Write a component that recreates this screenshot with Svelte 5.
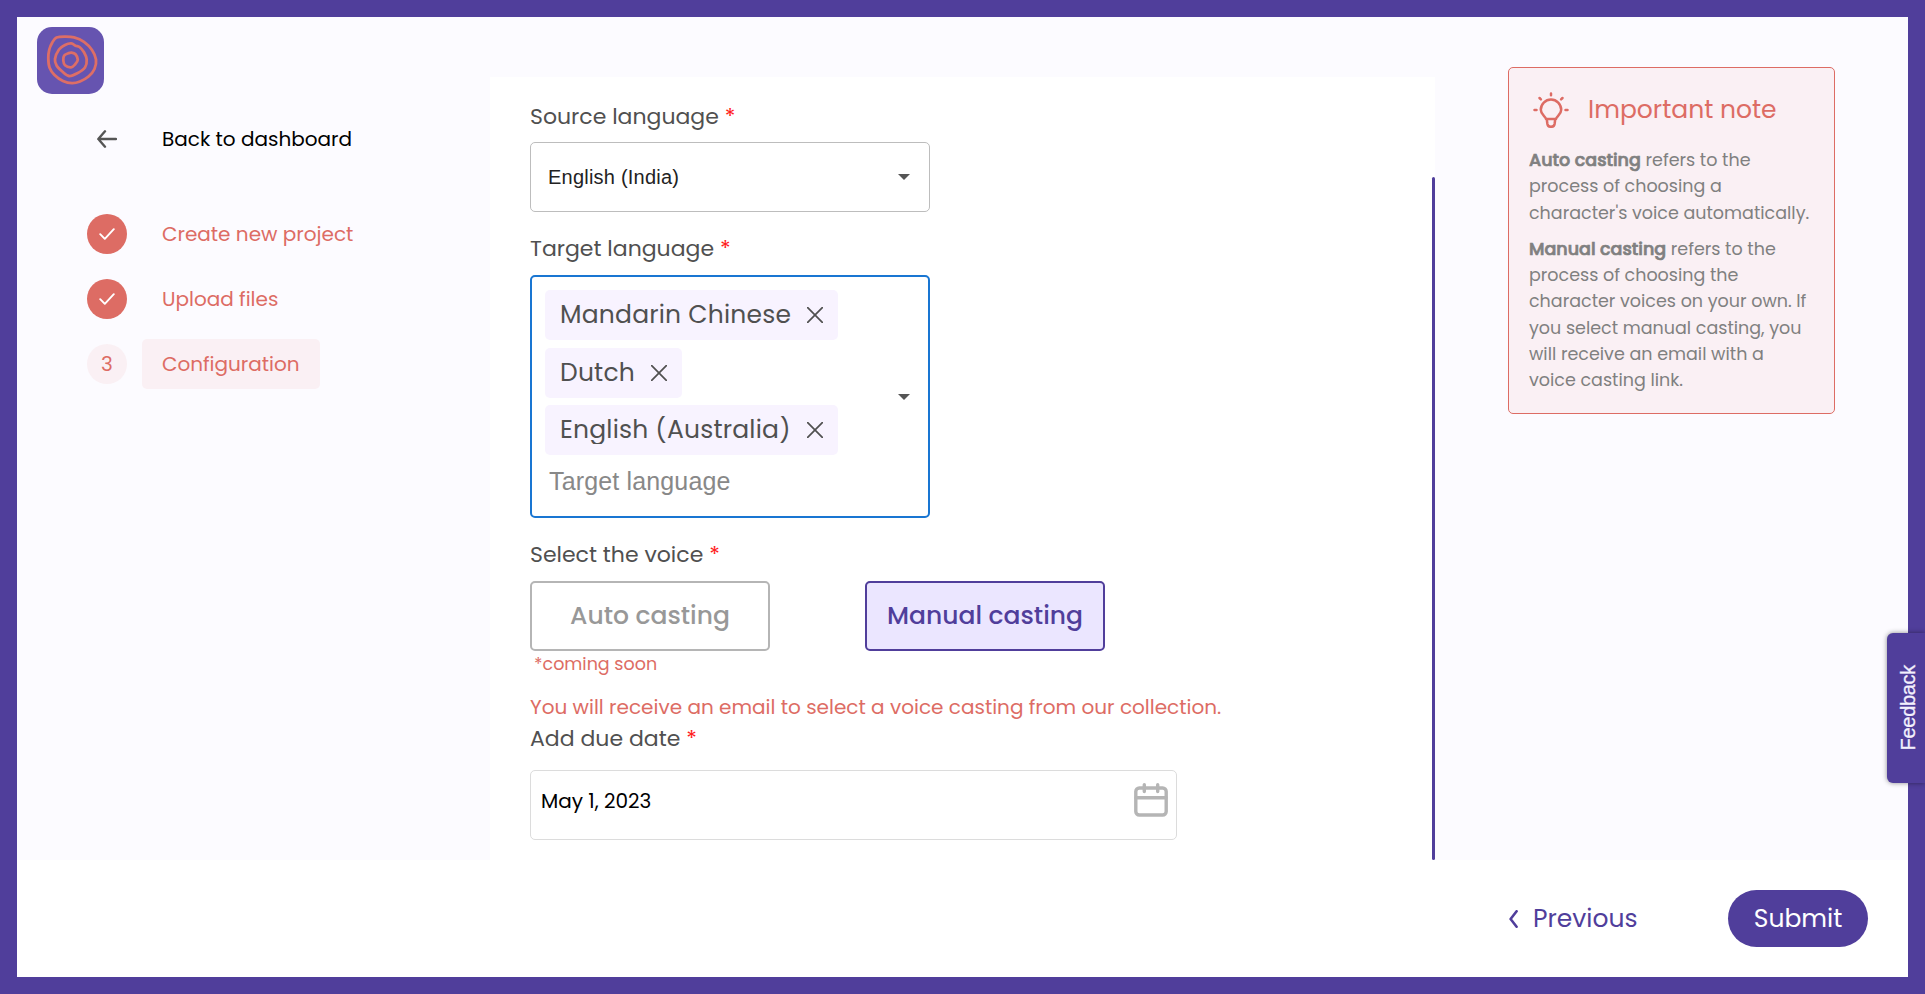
<script>
  // Closed smooth curve through the given points (Catmull-Rom to Bezier).
  function ring(points) {
    const n = points.length;
    const at = (i) => points[(i + n) % n];
    let d = `M${at(0).join(' ')}`;
    for (let i = 0; i < n; i++) {
      const [p0, p1, p2, p3] = [at(i - 1), at(i), at(i + 1), at(i + 2)];
      const c1 = [0, 1].map((k) => (p1[k] + (p2[k] - p0[k]) / 6).toFixed(2));
      const c2 = [0, 1].map((k) => (p2[k] - (p3[k] - p1[k]) / 6).toFixed(2));
      d += `C${c1.join(' ')} ${c2.join(' ')} ${p2.join(' ')}`;
    }
    return d + 'Z';
  }

  const rings = [
    ring([[19.5, 10.6], [28, 9.6], [37, 10.4], [47, 14.8], [55, 23], [59, 32.5], [57.5, 42], [51.5, 49.5], [43, 54.5], [35, 56.2], [26, 54], [17.5, 48], [12.5, 40.5], [11.3, 31], [12.3, 22.5], [15.3, 15.5]]),
    ring([[22, 22.5], [28, 18], [34.3, 16.4], [38.5, 18.8], [42.5, 20], [47, 25.3], [49.7, 32.5], [48, 40.5], [40.3, 46.3], [32, 49], [25.3, 44.5], [19.7, 38.7], [18, 32]]),
    ring([[31.5, 26.2], [34.5, 25.6], [38.5, 27.3], [40.8, 32.7], [38, 37.5], [34, 40.3], [28, 38.3], [26.3, 33.5], [27.2, 28.5]])
  ];

  const steps = [
    { label: 'Create new project', done: true },
    { label: 'Upload files', done: true },
    { label: 'Configuration', done: false }
  ];

  const chips = ['Mandarin Chinese', 'Dutch', 'English (Australia)'];
</script>

<div class="frame">
  <main class="page">
    <aside class="side">
      <svg class="logo" viewBox="0 0 67 67">
        <rect width="67" height="67" rx="15" />
        {#each rings as d}<path {d} />{/each}
      </svg>
      <div class="back">
        <svg width="20" height="18" viewBox="0 0 20 18"><path d="M19 9H1.500M8 1.300 1.300 9 8 16.700" /></svg>
        <span>Back to dashboard</span>
      </div>
      <ol class="steps">
        {#each steps as step, i}
          <li class:active={!step.done}>
            <span class="dot" class:done={step.done}>
              {#if step.done}
                <svg width="16" height="12" viewBox="0 0 16 12"><path d="M1.200 6.200 5.800 10.800 14.800 1.200" /></svg>
              {:else}{i + 1}{/if}
            </span>
            <span class="name">{step.label}</span>
          </li>
        {/each}
      </ol>
    </aside>

    <section class="panel">
      <div class="label first"><span>Source language</span><b>*</b></div>
      <div class="select">
        <span class="value">English (India)</span>
        <i class="caret"></i>
      </div>

      <div class="label"><span>Target language</span><b>*</b></div>
      <div class="select multi">
        <div class="chips">
          {#each chips as chip}
            <div class="chip">
              <span>{chip}</span>
              <svg width="16" height="16" viewBox="0 0 16 16"><path d="M.7.7 15.300 15.300M15.300.7.7 15.300" /></svg>
            </div>
          {/each}
          <span class="placeholder">Target language</span>
        </div>
        <i class="caret"></i>
      </div>

      <div class="label"><span>Select the voice</span><b>*</b></div>
      <div class="modes">
        <button class="mode">Auto casting</button>
        <button class="mode on">Manual casting</button>
      </div>
      <div class="soon">*coming soon</div>
      <div class="info">You will receive an email to select a voice casting from our collection.</div>

      <div class="label due"><span>Add due date</span><b>*</b></div>
      <div class="date">
        <span>May 1, 2023</span>
        <svg width="34" height="34" viewBox="0 0 34 34">
          <rect x="1.800" y="5" width="30.400" height="27" rx="3.500" />
          <path d="M2 14.800H32M10.300 1.800V8.500M23.700 1.800V8.500" />
        </svg>
      </div>
      <i class="thumb"></i>
    </section>

    <aside class="right">
      <div class="note">
        <h2>
          <svg width="36" height="36" viewBox="0 0 36 36">
            <path d="M13 27c-.4-2.600-5.200-4-5.200-9.200a10.200 10.200 0 0 1 20.400 0c0 5.200-4.800 6.600-5.200 9.200ZM13.800 27.500l.6 4.500c.3 1.800 1.500 2.800 3.600 2.800s3.300-1 3.600-2.800l.6-4.500" />
            <path d="M18 1.500v1.800M6.500 6l1.400 1.400M29.500 6l-1.400 1.400M1.500 18h2M34.500 18h-2" />
          </svg>
          <span>Important note</span>
        </h2>
        <p>
          <strong>Auto casting</strong> refers to the<br />
          process of choosing a<br />
          character's voice automatically.
        </p>
        <p>
          <strong>Manual casting</strong> refers to the<br />
          process of choosing the<br />
          character voices on your own. If<br />
          you select manual casting, you<br />
          will receive an email with a<br />
          voice casting link.
        </p>
      </div>
    </aside>
  </main>

  <footer>
    <button class="prev">
      <svg width="9" height="18" viewBox="0 0 9 18"><path d="M7.600 1.300 1.600 9 7.600 16.700" /></svg>
      <span>Previous</span>
    </button>
    <button class="submit"><span>Submit</span></button>
  </footer>
  <button class="feedback"><span>Feedback</span></button>
</div>

<style>
  :global(body) { margin: 0; }
  .frame, .frame :global(*) { box-sizing: border-box; }
  .frame {
    width: 1925px; height: 994px; padding: 17px; background: #503e9b;
    display: flex; flex-direction: column; overflow: hidden; position: relative;
    font-family: Poppins, Inter, sans-serif; font-feature-settings: "cv11"; font-weight: 400; color: #505050; white-space: nowrap;
  }
  svg { display: block; flex: none; fill: none; stroke-linecap: round; stroke-linejoin: round; }
  button { font: inherit; font-feature-settings: inherit; background: none; border: 0; padding: 0; }
  .page { height: 843px; flex: none; background: #fcfbff; display: flex; }

  .side { width: 473px; padding: 10px 0 0 20px; }
  .logo { width: 67px; height: 67px; }
  .logo rect { fill: #6654b0; }
  .logo path { stroke: #dd6e66; stroke-width: 2.800; }
  .back { display: flex; align-items: center; height: 30px; margin: 30px 0 0 60px; color: #000; font-size: 20px; gap: 45px; }
  .back svg { stroke: #555; stroke-width: 2.400; }
  .steps { list-style: none; margin: 55px 0 0 50px; padding: 0; display: flex; flex-direction: column; gap: 15px; font-size: 20px; color: #dd6c64; }
  .steps li { display: flex; align-items: center; height: 50px; gap: 15px; }
  .dot { width: 40px; height: 40px; border-radius: 50%; background: #faf0f4; display: grid; place-items: center; }
  .dot.done { background: #dd6c64; }
  .dot svg { stroke: #fff; stroke-width: 1.900; }
  .name { height: 50px; padding: 0 20px; line-height: 50px; border-radius: 5px; }
  .active .name { background: #faf0f4; width: 178px; }

  .panel { width: 945px; height: 783px; margin-top: 60px; background: #fff; padding: 23px 0 0 40px; position: relative; overflow: hidden; }
  .label { height: 33px; line-height: 33px; margin-bottom: 10px; font-size: 22px; display: flex; gap: 6px; }
  .label.first { margin-bottom: 9px; }
  .label.due { margin-bottom: 15px; }
  .label b { color: #ff1e1e; font-weight: 400; }
  .select { width: 400px; height: 70px; border: 1px solid #bdbdbd; border-radius: 5px; display: flex; align-items: center; justify-content: space-between; padding: 0 19px 0 17px; margin-bottom: 20px; }
  .value { font: 20px "Liberation Sans", Arial, sans-serif; letter-spacing: .220px; color: #222; }
  .caret { width: 0; height: 0; border: 6.500px solid transparent; border-top-color: #555; border-bottom: 0; }
  .multi { height: 243px; border: 2px solid #1976d2; padding: 0 18px 0 13px; align-items: flex-start; }
  .multi .caret { align-self: center; }
  .chips { display: flex; flex-direction: column; align-items: flex-start; gap: 7.500px; padding-top: 13px; }
  .chip { height: 50px; background: #f8f3ff; border-radius: 5px; padding: 0 15px; display: flex; align-items: center; gap: 16px; font-size: 25px; letter-spacing: .200px; }
  .chip span { height: 28px; line-height: 28px; overflow: hidden; }
  .chip svg { stroke: #505050; stroke-width: 1.700; }
  .placeholder { font: 25px/36px "Liberation Sans", Arial, sans-serif; letter-spacing: .150px; color: #888; padding-left: 4px; }

  .modes { display: flex; gap: 95px; }
  .mode { width: 240px; height: 70px; border: 2px solid #b5b5b5; border-radius: 5px; font-size: 25px; font-weight: 500; color: #989898; text-align: center; }
  .mode.on { border-color: #503e9b; background: #ebe6ff; color: #503e9b; }
  .soon { height: 26px; line-height: 26px; font-size: 17.500px; color: #dd6c64; padding-left: 4px; }
  .info { height: 30px; line-height: 30px; font-size: 20px; color: #dd6c64; margin-top: 15px; }
  .date { width: 647px; height: 70px; border: 1px solid #dcdcdc; border-radius: 5px; padding: 12px 8px 0 10px; display: flex; justify-content: space-between; align-items: flex-start; font-size: 20px; line-height: 37px; color: #000; }
  .date svg { stroke: #b5b5b5; stroke-width: 3.400; }
  .thumb { position: absolute; right: 0; top: 100px; bottom: 0; width: 3px; border-radius: 2px; background: #503e9b; }

  .right { padding: 50px 0 0 73px; }
  .note { width: 327px; height: 347px; border: 1px solid #dd6c64; border-radius: 5px; background: #faf0f4; padding: 24px 20px 0; color: #808080; font-size: 17.500px; }
  .note h2 { margin: 0 0 19px; font: inherit; font-size: 25px; height: 36px; padding-left: 4px; display: flex; align-items: center; gap: 19px; color: #dd6c64; }
  .note h2 svg { stroke: #dd6c64; stroke-width: 2.500; }
  .note p { margin: 0 0 10px; line-height: 26.250px; }
  .note strong { font-weight: 500; -webkit-text-stroke: .700px; }

  footer { flex: 1; background: #fff; display: flex; justify-content: flex-end; align-items: center; padding-right: 40px; font-size: 25px; }
  .prev { display: flex; align-items: center; gap: 15px; color: #503e9b; margin-right: 90.500px; }
  .prev svg { stroke: #503e9b; stroke-width: 2.600; }
  .submit { width: 140px; height: 57px; border-radius: 29px; background: #503e9b; color: #fff; }
  .feedback { position: absolute; right: 0; top: 633px; width: 38px; height: 150px; border-radius: 6px 0 0 6px; background: #503e9b; box-shadow: 0 0 5px rgba(0, 0, 0, .45); display: grid; place-items: center; padding-left: 4px; }
  .feedback span { writing-mode: vertical-rl; transform: rotate(180deg); font: 20px/22px "Liberation Sans", Arial, sans-serif; color: #f3f0fd; letter-spacing: -.300px; -webkit-text-stroke: .300px; }
</style>
